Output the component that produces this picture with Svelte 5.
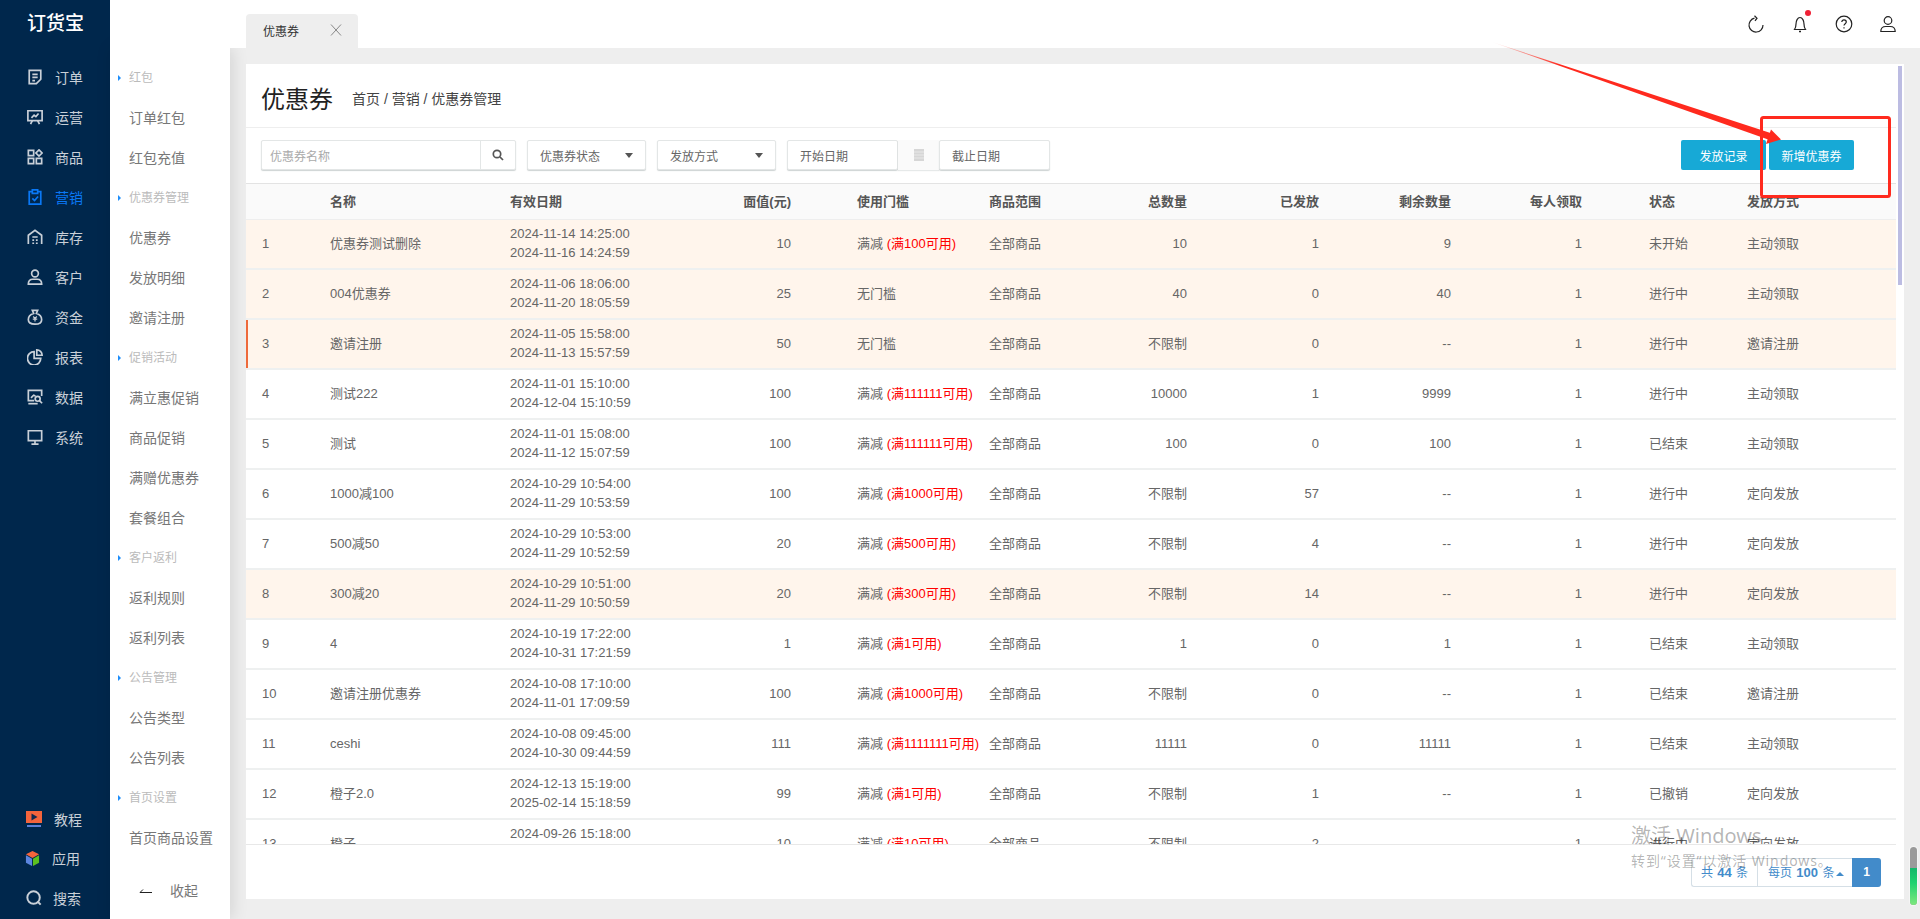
<script>
  const nav = [
    { t: '订单', i: 'order' }, { t: '运营', i: 'ops' }, { t: '商品', i: 'goods' },
    { t: '营销', i: 'market', active: true }, { t: '库存', i: 'stock' }, { t: '客户', i: 'customer' },
    { t: '资金', i: 'money' }, { t: '报表', i: 'report' }, { t: '数据', i: 'data' }, { t: '系统', i: 'system' }
  ];
  const sub = [
    ['g', '红包'], ['i', '订单红包'], ['i', '红包充值'],
    ['g', '优惠券管理'], ['i', '优惠券'], ['i', '发放明细'], ['i', '邀请注册'],
    ['g', '促销活动'], ['i', '满立惠促销'], ['i', '商品促销'], ['i', '满赠优惠券'], ['i', '套餐组合'],
    ['g', '客户返利'], ['i', '返利规则'], ['i', '返利列表'],
    ['g', '公告管理'], ['i', '公告类型'], ['i', '公告列表'],
    ['g', '首页设置'], ['i', '首页商品设置']
  ];
  const heads = ['', '名称', '有效日期', '面值(元)', '使用门槛', '商品范围', '总数量', '已发放', '剩余数量', '每人领取', '状态', '发放方式'];
  const rows = [
    [1, '优惠券测试删除', '2024-11-14 14:25:00', '2024-11-16 14:24:59', 10, '满100可用', 10, 1, 9, '未开始', '主动领取', 'hl'],
    [2, '004优惠券', '2024-11-06 18:06:00', '2024-11-20 18:05:59', 25, '', 40, 0, 40, '进行中', '主动领取', 'hl'],
    [3, '邀请注册', '2024-11-05 15:58:00', '2024-11-13 15:57:59', 50, '', '不限制', 0, '--', '进行中', '邀请注册', 'hl cur'],
    [4, '测试222', '2024-11-01 15:10:00', '2024-12-04 15:10:59', 100, '满111111可用', 10000, 1, 9999, '进行中', '主动领取', ''],
    [5, '测试', '2024-11-01 15:08:00', '2024-11-12 15:07:59', 100, '满111111可用', 100, 0, 100, '已结束', '主动领取', ''],
    [6, '1000减100', '2024-10-29 10:54:00', '2024-11-29 10:53:59', 100, '满1000可用', '不限制', 57, '--', '进行中', '定向发放', ''],
    [7, '500减50', '2024-10-29 10:53:00', '2024-11-29 10:52:59', 20, '满500可用', '不限制', 4, '--', '进行中', '定向发放', ''],
    [8, '300减20', '2024-10-29 10:51:00', '2024-11-29 10:50:59', 20, '满300可用', '不限制', 14, '--', '进行中', '定向发放', 'hl'],
    [9, '4', '2024-10-19 17:22:00', '2024-10-31 17:21:59', 1, '满1可用', 1, 0, 1, '已结束', '主动领取', ''],
    [10, '邀请注册优惠券', '2024-10-08 17:10:00', '2024-11-01 17:09:59', 100, '满1000可用', '不限制', 0, '--', '已结束', '邀请注册', ''],
    [11, 'ceshi', '2024-10-08 09:45:00', '2024-10-30 09:44:59', 111, '满1111111可用', 11111, 0, 11111, '已结束', '主动领取', ''],
    [12, '橙子2.0', '2024-12-13 15:19:00', '2025-02-14 15:18:59', 99, '满1可用', '不限制', 1, '--', '已撤销', '定向发放', ''],
    [13, '橙子', '2024-09-26 15:18:00', '2024-10-26 15:17:59', 10, '满10可用', '不限制', 2, '--', '进行中', '定向发放', '']
  ];
</script>

{#snippet navIcon(name)}
  <svg class="ni" viewBox="0 0 18 18" width="16" height="16" fill="none" stroke="currentColor" stroke-width="1.9">
    {#if name === 'order'}
      <path d="M2.500 1.500h13v10l-5 5h-8z" /><path d="M6 6h6M6 9.500h6M6 13h3" />
    {:else if name === 'ops'}
      <path d="M1 2h16v11H1z" /><path d="M5 10l3-3 2 1.500 3-3.500M6 13l-2 4M12 13l2 4" />
    {:else if name === 'goods'}
      <path d="M1.500 1.500h6v6h-6zM1.500 10.500h6v6h-6zM10.500 10.500h6v6h-6z" /><path d="M13.500 1l3.500 3.500L13.500 8 10 4.500z" />
    {:else if name === 'market'}
      <path d="M6 3H2.500v14h13V3H12" /><path d="M6 1h6v4H6z" /><path d="M6 10.500l2.500 2.500L12.500 8.500" />
    {:else if name === 'stock'}
      <path d="M1.500 17V7L9 1.500 16.500 7v10" /><path d="M6 9h6M6 12.500h2M10 12.500h2M6 16h2M10 16h2" />
    {:else if name === 'customer'}
      <circle cx="9" cy="5" r="3.800" /><path d="M1.500 17c0-3.500 2-5.500 5-5.500h5c3 0 5 2 5 5.500z" />
    {:else if name === 'money'}
      <path d="M6 1.500h6l-1.500 3.500c3.500 1 6 4 6 7 0 3-3 5-7.500 5s-7.500-2-7.500-5c0-3 2.500-6 6-7z" /><path d="M7 8.500l2 2 2-2M9 10.500v3.500M6.500 11.500h5" stroke-width="1.400" />
    {:else if name === 'report'}
      <path d="M8 3a7.500 7.500 0 1 0 7.500 7.500H8z" /><path d="M11 1a6 6 0 0 1 6 6h-6z" />
    {:else if name === 'data'}
      <path d="M16.500 8V1.500h-15V13H8" /><path d="M1.500 16.500H12" /><path d="M4.500 10l3-3 2 1" /><circle cx="12" cy="11" r="2.800" /><path d="M14 13l3 3" />
    {:else if name === 'system'}
      <path d="M1.500 2h15v11h-15z" /><path d="M9 13v3.500M5 17h8" />
    {/if}
  </svg>
{/snippet}

<div class="page">
  <aside class="rail">
    <div class="logo">订货宝</div>
    <nav class="main-nav">
      {#each nav as n}
        <div class="nav-item" class:active={n.active}>
          {@render navIcon(n.i)}
          <span>{n.t}</span>
        </div>
      {/each}
    </nav>
    <div class="rail-bottom">
      <div class="nav-item low">
        <svg class="ni" viewBox="0 0 16 16" width="16" height="16">
          <path d="M0 0h16v12H0z" fill="#f4643c" /><path d="M5.500 2.500l6 3.500-6 3.500z" fill="#12294f" /><path d="M1 14h14v2H1z" fill="#5b7fd6" />
        </svg>
        <span>教程</span>
      </div>
      <div class="nav-item low app">
        <svg class="ni" viewBox="0 0 16 18" width="15" height="17">
          <path d="M8 1l7 3.500L8 8.500 1 4.500z" fill="#f4643c" /><path d="M1 5.500l6.500 3.800V17L1 13.500z" fill="#5b85e0" /><path d="M15 5.500L8.500 9.300V17l6.500-3.500z" fill="#5cc01f" />
        </svg>
        <span>应用</span>
      </div>
      <div class="nav-item low find">
        <svg class="ni" viewBox="0 0 18 18" width="16" height="16" fill="none" stroke="currentColor" stroke-width="2.200">
          <circle cx="8.500" cy="8.500" r="7" /><path d="M13 13l3.500 3.500" />
        </svg>
        <span>搜索</span>
      </div>
    </div>
  </aside>

  <aside class="submenu">
    {#each sub as s}
      {#if s[0] === 'g'}
        <div class="sub-group">{s[1]}</div>
      {:else}
        <div class="sub-item">{s[1]}</div>
      {/if}
    {/each}
    <div class="collapse">
      <svg viewBox="0 0 13 6" width="13" height="6" fill="none" stroke="#222" stroke-width="1"><path d="M13 4.500H1L4 1.500" /></svg>
      <span>收起</span>
    </div>
  </aside>

  <div class="main">
    <header class="topbar">
      <div class="tab">
        <span>优惠券</span>
        <svg viewBox="0 0 12 12" width="12" height="12" fill="none" stroke="#888" stroke-width="1"><path d="M1 .5l10 11M11 .5l-10 11" /></svg>
      </div>
      <div class="tools">
        <svg viewBox="0 0 18 18" width="18" height="18" fill="none" stroke="#222" stroke-width="1.200">
          <path d="M16 10A7 7 0 1 1 7.500 3.200" /><path d="M7.500 .8L10 3.200 8 5.800" />
        </svg>
        <span class="bell">
          <svg viewBox="0 0 18 18" width="18" height="18" fill="none" stroke="#222" stroke-width="1.200">
            <path d="M3.500 14.500c1-1.500 1.500-2.500 1.500-5.500S6.500 2.500 9 2.500s4 3.500 4 6.500.5 4 1.500 5.500z" /><path d="M8 16.500h2" stroke-width="1.600" />
          </svg>
          <i></i>
        </span>
        <svg viewBox="0 0 18 18" width="18" height="18" fill="none" stroke="#222" stroke-width="1.200">
          <circle cx="9" cy="9" r="7.800" /><path d="M6.800 7c0-1.300 1-2.200 2.200-2.200S11.300 5.700 11.300 7c0 1.600-2.300 1.800-2.300 3.600" /><path d="M9 12.300v1.200" />
        </svg>
        <svg viewBox="0 0 18 18" width="18" height="18" fill="none" stroke="#222" stroke-width="1.200">
          <circle cx="9" cy="5.500" r="3.800" /><path d="M1.800 16.500c0-3 2-5 5-5h4.400c3 0 5 2 5 5z" />
        </svg>
      </div>
    </header>

    <section class="panel">
      <div class="thumb"></div>
      <div class="panel-head">
        <h1>优惠券</h1>
        <div class="crumb">首页 / 营销 / 优惠券管理</div>
      </div>

      <div class="filters">
        <div class="search">
          <span class="ph">优惠券名称</span>
          <span class="search-btn">
            <svg viewBox="0 0 12 12" width="12" height="12" fill="none" stroke="#555" stroke-width="1.700"><circle cx="5" cy="5" r="3.700" /><path d="M8 8l3 3" /></svg>
          </span>
        </div>
        <div class="select"><span>优惠券状态</span><i class="caret"></i></div>
        <div class="select"><span>发放方式</span><i class="caret"></i></div>
        <div class="dates">
          <span class="date">开始日期</span>
          <span class="cal"><svg viewBox="0 0 10 12" width="10" height="12"><path d="M0 0h10v12H0z" fill="#d6d6d6" /><path d="M0 3h10M0 6h10M0 9h10" stroke="#eee" stroke-width=".8" /></svg></span>
          <span class="date">截止日期</span>
        </div>
        <div class="actions">
          <button>发放记录</button>
          <button>新增优惠券</button>
        </div>
      </div>

      <div class="table-wrap">
        <table>
          <colgroup>
            <col style="width:84px" /><col style="width:180px" /><col style="width:190px" /><col style="width:91px" />
            <col style="width:198px" /><col style="width:92px" /><col style="width:106px" /><col style="width:132px" />
            <col style="width:132px" /><col style="width:131px" /><col style="width:165px" /><col style="width:149px" />
          </colgroup>
          <thead>
            <tr>
              {#each heads as h, i}
                <th class="c{i}">{h}</th>
              {/each}
            </tr>
          </thead>
          <tbody>
            {#each rows as r}
              <tr class={r[11]}>
                <td class="c0">{r[0]}</td>
                <td class="c1">{r[1]}</td>
                <td class="c2">{r[2]}<br />{r[3]}</td>
                <td class="c3">{r[4]}</td>
                <td class="c4">
                  {#if r[5]}满减 <em>({r[5]})</em>{:else}无门槛{/if}
                </td>
                <td class="c5">全部商品</td>
                <td class="c6">{r[6]}</td>
                <td class="c7">{r[7]}</td>
                <td class="c8">{r[8]}</td>
                <td class="c9">1</td>
                <td class="c10">{r[9]}</td>
                <td class="c11">{r[10]}</td>
              </tr>
            {/each}
          </tbody>
        </table>
      </div>

      <div class="panel-foot">
        <div class="pager">
          <span class="pg-a">共 <b>44</b> 条</span>
          <span class="pg-b">每页 <b>100</b> 条<i></i></span>
          <span class="pg-c">1</span>
        </div>
      </div>
    </section>
  </div>

  <svg class="annot" viewBox="0 0 1920 919" width="1920" height="919" aria-hidden="true">
    <defs>
      <linearGradient id="fade" gradientUnits="userSpaceOnUse" x1="1492" y1="42" x2="1560" y2="66">
        <stop offset="0" stop-color="#ff2a1e" stop-opacity="0.05" />
        <stop offset="1" stop-color="#ff2a1e" />
      </linearGradient>
    </defs>
    <path d="M1492 42L1772 133.500L1769.500 140z" fill="url(#fade)" />
    <path d="M1771 129.500L1781 139.500L1766 144z" fill="#ff2a1e" />
    <rect x="1761.500" y="117.500" width="128" height="79" rx="2" fill="none" stroke="#ff2a1e" stroke-width="3" />
  </svg>

  <div class="watermark">
    <div class="wm1">激活 Windows</div>
    <div class="wm2">转到“设置”以激活 Windows。</div>
  </div>

  <div class="indicator"><span></span></div>
</div>

<style>
  :global(body) {
    margin: 0;
    background: #eee;
  }
  .page {
    position: relative;
    width: 1920px;
    height: 919px;
    overflow: hidden;
    display: flex;
    background: #eee;
    font-family: "Liberation Sans", "Noto Sans CJK SC", sans-serif;
    font-size: 13px;
    color: #666;
  }
  .rail {
    width: 110px;
    flex: none;
    background: #00274c;
    display: flex;
    flex-direction: column;
    color: #c9d0d8;
  }
  .logo {
    height: 48px;
    padding-left: 27px;
    font-size: 19px;
    line-height: 47px;
    font-weight: 500;
    color: #fff;
    box-sizing: border-box;
  }
  .main-nav {
    padding-top: 10px;
  }
  .nav-item {
    height: 40px;
    box-sizing: border-box;
    padding: 0 0 2px 27px;
    display: flex;
    align-items: center;
    gap: 12px;
    font-size: 14px;
  }
  .nav-item.active {
    color: #0a78f5;
  }
  .ni {
    flex: none;
  }
  .rail-bottom {
    margin-top: auto;
    height: 120px;
  }
  .nav-item.low {
    padding: 0 0 0 26px;
  }
  .nav-item.low.app {
    padding: 0 0 2px 25px;
    gap: 12px;
  }
  .nav-item.low.find {
    padding: 0 0 2px 26px;
    gap: 11px;
  }
  .submenu {
    position: relative;
    z-index: 2;
    width: 120px;
    flex: none;
    margin-top: 48px;
    background: #fff;
    padding-top: 10px;
    box-sizing: border-box;
    box-shadow: 2px 0 16px rgba(0, 0, 0, 0.12);
    color: #777;
  }
  .sub-group {
    position: relative;
    height: 40px;
    line-height: 40px;
    padding-left: 19px;
    font-size: 12px;
    color: #bbb;
  }
  .sub-group::before {
    content: "";
    position: absolute;
    left: 8px;
    top: 17px;
    border-left: 3px solid #1f8efa;
    border-top: 3px solid transparent;
    border-bottom: 3px solid transparent;
  }
  .sub-item {
    height: 40px;
    line-height: 40px;
    padding-left: 19px;
    font-size: 14px;
  }
  .collapse {
    display: flex;
    align-items: center;
    gap: 18px;
    padding: 23px 0 0 29px;
    font-size: 14px;
    line-height: 20px;
  }
  .main {
    flex: 1;
    min-width: 0;
    display: flex;
    flex-direction: column;
    position: relative;
    z-index: 3;
  }
  .topbar {
    height: 48px;
    flex: none;
    margin-left: -120px;
    padding-left: 136px;
    background: #fff;
    display: flex;
    align-items: flex-end;
  }
  .tab {
    width: 112px;
    height: 34px;
    box-sizing: border-box;
    background: #eee;
    border-radius: 4px 4px 0 0;
    display: flex;
    align-items: center;
    justify-content: space-between;
    padding: 0 16px 2px 17px;
    font-size: 12px;
    color: #333;
  }
  .tools {
    margin-left: auto;
    align-self: center;
    display: flex;
    gap: 26px;
    padding-right: 23px;
  }
  .bell {
    position: relative;
    height: 18px;
  }
  .bell i {
    position: absolute;
    right: -2px;
    top: -5px;
    width: 6px;
    height: 6px;
    border-radius: 50%;
    background: #f02035;
  }
  .panel {
    margin: 16px 16px 20px 16px;
    flex: 1;
    min-height: 0;
    background: #fff;
    display: flex;
    flex-direction: column;
    position: relative;
  }
  .thumb {
    position: absolute;
    top: 2px;
    right: 2px;
    width: 4px;
    height: 219px;
    background: #bcbce2;
  }
  .panel-head {
    height: 64px;
    box-sizing: border-box;
    margin-right: 8px;
    border-bottom: 1px solid #eee;
    display: flex;
    align-items: center;
    padding: 4px 0 0 15px;
    gap: 19px;
  }
  h1 {
    margin: 0;
    font-size: 24px;
    font-weight: 400;
    color: #222;
  }
  .crumb {
    font-size: 14px;
    color: #444;
    padding-top: 1px;
  }
  .filters {
    height: 55px;
    box-sizing: border-box;
    margin-right: 8px;
    padding: 12px 0 0 15px;
    display: flex;
    align-items: flex-start;
    gap: 11px;
    font-size: 12px;
    color: #666;
  }
  .search,
  .select,
  .date {
    height: 30px;
    box-sizing: border-box;
    border: 1px solid #e3e6e6;
    box-shadow: 0 1px 1px rgba(90, 110, 110, 0.3);
    background: #fff;
    border-radius: 2px;
    display: flex;
    align-items: center;
  }
  .search {
    width: 255px;
    padding-left: 8px;
    justify-content: space-between;
  }
  .ph {
    color: #aaa;
  }
  .search-btn {
    width: 34px;
    height: 100%;
    border-left: 1px solid #e3e6e6;
    display: flex;
    align-items: center;
    justify-content: center;
  }
  .select {
    width: 119px;
    padding: 0 12px;
    justify-content: space-between;
  }
  .caret {
    border-top: 5px solid #555;
    border-left: 4px solid transparent;
    border-right: 4px solid transparent;
  }
  .dates {
    display: flex;
    align-items: stretch;
    height: 30px;
  }
  .date {
    width: 111px;
    padding-left: 12px;
  }
  .cal {
    width: 41px;
    display: flex;
    align-items: center;
    justify-content: center;
    background: #fafafa;
    box-shadow: 0 1px 1px rgba(90, 110, 110, 0.15);
  }
  .actions {
    margin-left: auto;
    margin-right: 42px;
    display: flex;
    gap: 3px;
  }
  .actions button {
    width: 85px;
    height: 30px;
    border: 0;
    padding: 0;
    border-radius: 2px;
    background: #17a9d6;
    color: #fff;
    font: inherit;
    font-size: 12px;
  }
  .table-wrap {
    height: 662px;
    flex: none;
    box-sizing: border-box;
    overflow: hidden;
    position: relative;
    border-bottom: 1px solid #e8e8e8;
    margin-right: 8px;
    border-top: 1px solid #e3e3e3;
  }
  table {
    table-layout: fixed;
    width: 1650px;
    border-collapse: separate;
    border-spacing: 0;
    color: #666;
  }
  th {
    height: 33px;
    background: #fafafa;
    border-bottom: 1px solid #eee;
    font-size: 13px;
    font-weight: 700;
    color: #555;
    padding: 0 0 2px;
    text-align: left;
  }
  td {
    height: 46px;
    padding: 0 0 2px;
    border-bottom: 2px solid #eef0f0;
    line-height: 19px;
    white-space: nowrap;
  }
  tr.hl td {
    background: #fff5ec;
  }
  tr.cur td.c0 {
    box-shadow: inset 2px 0 0 #ee6a3c;
  }
  th.c0,
  td.c0 {
    padding-left: 16px;
  }
  .c3,
  .c6,
  .c7,
  .c8,
  .c9 {
    text-align: right;
  }
  th.c4,
  td.c4 {
    padding-left: 66px;
  }
  th.c10,
  td.c10 {
    padding-left: 67px;
  }
  em {
    font-style: normal;
    color: #f00;
  }
  .panel-foot {
    flex: 1;
    margin-right: 23px;
    display: flex;
    justify-content: flex-end;
    align-items: flex-start;
    padding-top: 13px;
  }
  .pager {
    display: flex;
    height: 29px;
    color: #428bca;
    line-height: 27px;
    font-size: 12px;
    word-spacing: 1px;
  }
  .pager b {
    font-weight: 700;
    font-size: 13px;
  }
  .pg-a,
  .pg-b {
    box-sizing: border-box;
    border: 1px solid #d5dfe6;
    background: #fff;
    text-align: center;
  }
  .pg-a {
    width: 66px;
    border-radius: 3px 0 0 3px;
    border-right: 0;
  }
  .pg-b {
    width: 95px;
    border-left: 1px solid #d5dfe6;
    border-right: 0;
    position: relative;
    text-align: left;
    padding-left: 10px;
  }
  .pg-b i {
    position: absolute;
    right: 8px;
    top: 13px;
    border-bottom: 4px solid #428bca;
    border-left: 4px solid transparent;
    border-right: 4px solid transparent;
  }
  .pg-c {
    width: 29px;
    background: #428bca;
    color: #fff;
    text-align: center;
    border-radius: 0 3px 3px 0;
    font-weight: 700;
    line-height: 29px;
  }
  .annot {
    position: absolute;
    left: 0;
    top: 0;
    z-index: 5;
    pointer-events: none;
  }
  .watermark {
    position: absolute;
    left: 1631px;
    top: 822px;
    z-index: 6;
    color: rgba(0, 0, 0, 0.3);
    pointer-events: none;
    font-family: "Noto Sans", "Noto Sans CJK SC", sans-serif;
  }
  .wm1 {
    font-size: 20px;
    line-height: 28px;
  }
  .wm2 {
    font-size: 14px;
    line-height: 20px;
    margin-top: 1px;
    letter-spacing: 0.9px;
  }
  .indicator {
    position: absolute;
    left: 1910px;
    top: 847px;
    width: 7px;
    height: 58px;
    border-radius: 4px;
    background: #9a9a9a;
    z-index: 6;
    overflow: hidden;
    box-shadow: 0 0 0 1px #f5f5f5;
  }
  .indicator span {
    position: absolute;
    left: 0;
    right: 0;
    top: 21px;
    bottom: 0;
    background: linear-gradient(#12b76a, #1fd270 40%, #7ee77e);
  }
</style>
